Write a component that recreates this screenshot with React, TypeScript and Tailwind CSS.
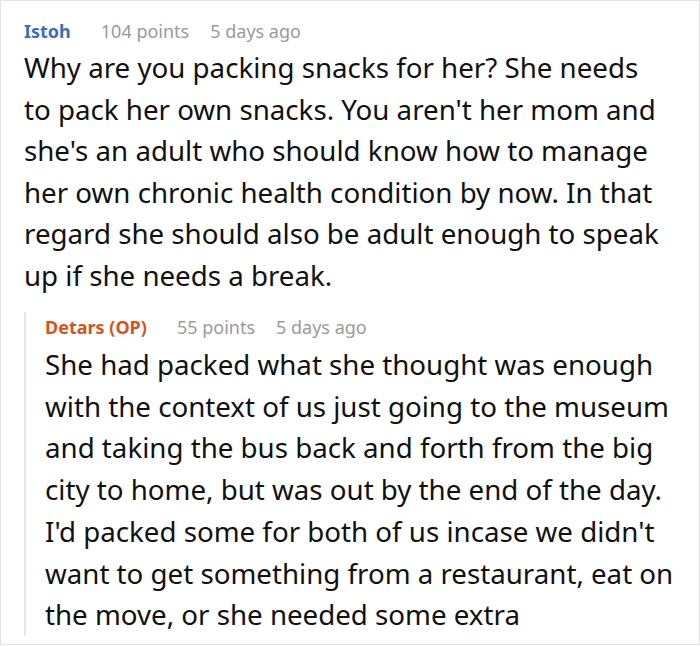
import React from 'react';

const Meta = ({ name, color, points, ago }: { name: string; color: string; points: string; ago: string }) => (
  <div className="flex items-center h-[26px] text-[18px] leading-[26px]">
    <span className={`font-bold ${color}`}>{name}</span>
    <span className="ml-[30px] text-[#9a9a9a]">{points}</span>
    <span className="ml-[21px] text-[#9a9a9a]">{ago}</span>
  </div>
);

export default function App() {
  return (
    <div className="w-[700px] h-[646px] overflow-hidden bg-white" style={{ fontFamily: '"Noto Sans", "Open Sans", sans-serif' }}>
      <div className="h-[645px] overflow-hidden border border-[#e3e3e3] pl-[23px] pr-[8px] pt-[17px]">
        <Meta name="Istoh" color="text-[#3b6ec2]" points="104 points" ago="5 days ago" />
        <p className="mt-[3px] mr-[25px] text-[27.7px] leading-[41.5px] text-[#111]">
          Why are you packing snacks for her? She needs to pack her own snacks. You aren't her mom and she's an adult who should know how to manage her own chronic health condition by now. In that regard she should also be adult enough to speak up if she needs a break.
        </p>
        <div className="mt-[16px] border-l-2 border-[#e6e6e6] pl-[19px] pt-[2px]">
          <Meta name="Detars (OP)" color="text-[#d4541f]" points="55 points" ago="5 days ago" />
          <p className="mt-[4px] text-[27.7px] leading-[41.7px] text-[#111]">
            She had packed what she thought was enough with the context of us just going to the museum and taking the bus back and forth from the big city to home, but was out by the end of the day. I'd packed some for both of us incase we didn't want to get something from a restaurant, eat on the move, or she needed some extra
          </p>
        </div>
      </div>
    </div>
  );
}
